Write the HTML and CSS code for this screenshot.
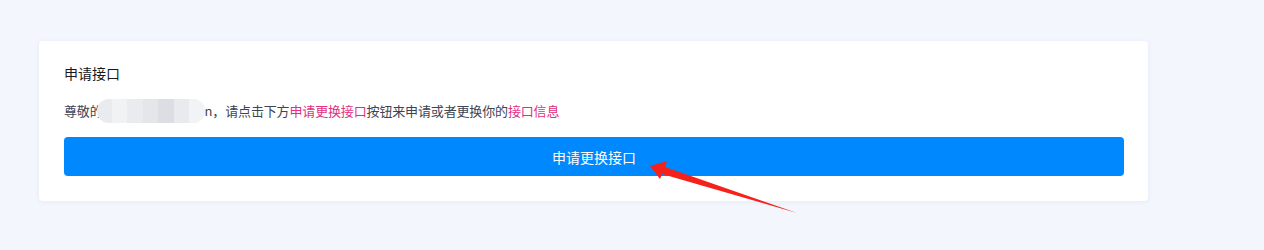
FILE: index.html
```html
<!DOCTYPE html>
<html lang="zh-CN">
<head>
    <meta charset="UTF-8">
    <title>申请接口</title>
    <link rel="stylesheet" href="styles.css">
</head>
<body>

    <div class="card">
        <div class="card-title">申请接口</div>
        <p class="card-text">尊敬的<span class="masked"><i></i><i></i><i></i><i></i><i></i><i></i><i></i></span>n，请点击下方<span class="hl">申请更换接口</span>按钮来申请或者更换你的<span class="hl">接口信息</span></p>
        <button class="apply-button">申请更换接口</button>
    </div>

    <!-- annotation arrow drawn over the screenshot -->
    <svg class="arrow" width="1264" height="250" viewBox="0 0 1264 250">
        <polygon fill="#f5221b" points="650,166 667,161 665,167 797,213 662,174 660,179"/>
    </svg>

</body>
</html>
```

FILE: styles.css
```css
body {
    margin: 0;
    padding: 41px 0 0 39px;
    background-color: #f3f6fd;
    font-family: "Noto Sans CJK SC", "Noto Sans", sans-serif;
    height: 250px;
    box-sizing: border-box;
    overflow: hidden;
}

.card {
    width: 1109px;
    box-sizing: border-box;
    padding: 22px 24px 25px 25px;
    background-color: #fff;
    border-radius: 4px;
    box-shadow: 0 1px 4px rgba(200, 210, 230, 0.35);
}

.card-title {
    font-size: 14px;
    line-height: 20px;
    color: #15181d;
}

.card-text {
    margin: 16px 0 14px;
    font-size: 13px;
    line-height: 20px;
    letter-spacing: -0.15px;
    color: #3d4453;
    display: flex;
    align-items: center;
}

.hl {
    color: #e0307f;
}

.masked {
    display: inline-flex;
    width: 108px;
    height: 24px;
    margin-left: -6px;
    margin-right: 0;
    border-radius: 12px;
    overflow: hidden;
    background-color: #eceef1;
}

.masked i {
    flex: 1;
    background-color: #e9ebef;
}

.masked i:nth-child(2) { background-color: #f1f2f4; }
.masked i:nth-child(4) { background-color: #e4e6ea; }
.masked i:nth-child(5) { background-color: #dcdee3; }
.masked i:nth-child(6) { background-color: #e8eaee; }
.masked i:nth-child(7) { background-color: #f2f3f5; }

.apply-button {
    display: block;
    width: 100%;
    height: 39px;
    border: none;
    border-radius: 4px;
    background-color: #0088ff;
    color: #fff;
    font-family: inherit;
    font-size: 14px;
    cursor: pointer;
}

.arrow {
    position: absolute;
    left: 0;
    top: 0;
    pointer-events: none;
}
```
